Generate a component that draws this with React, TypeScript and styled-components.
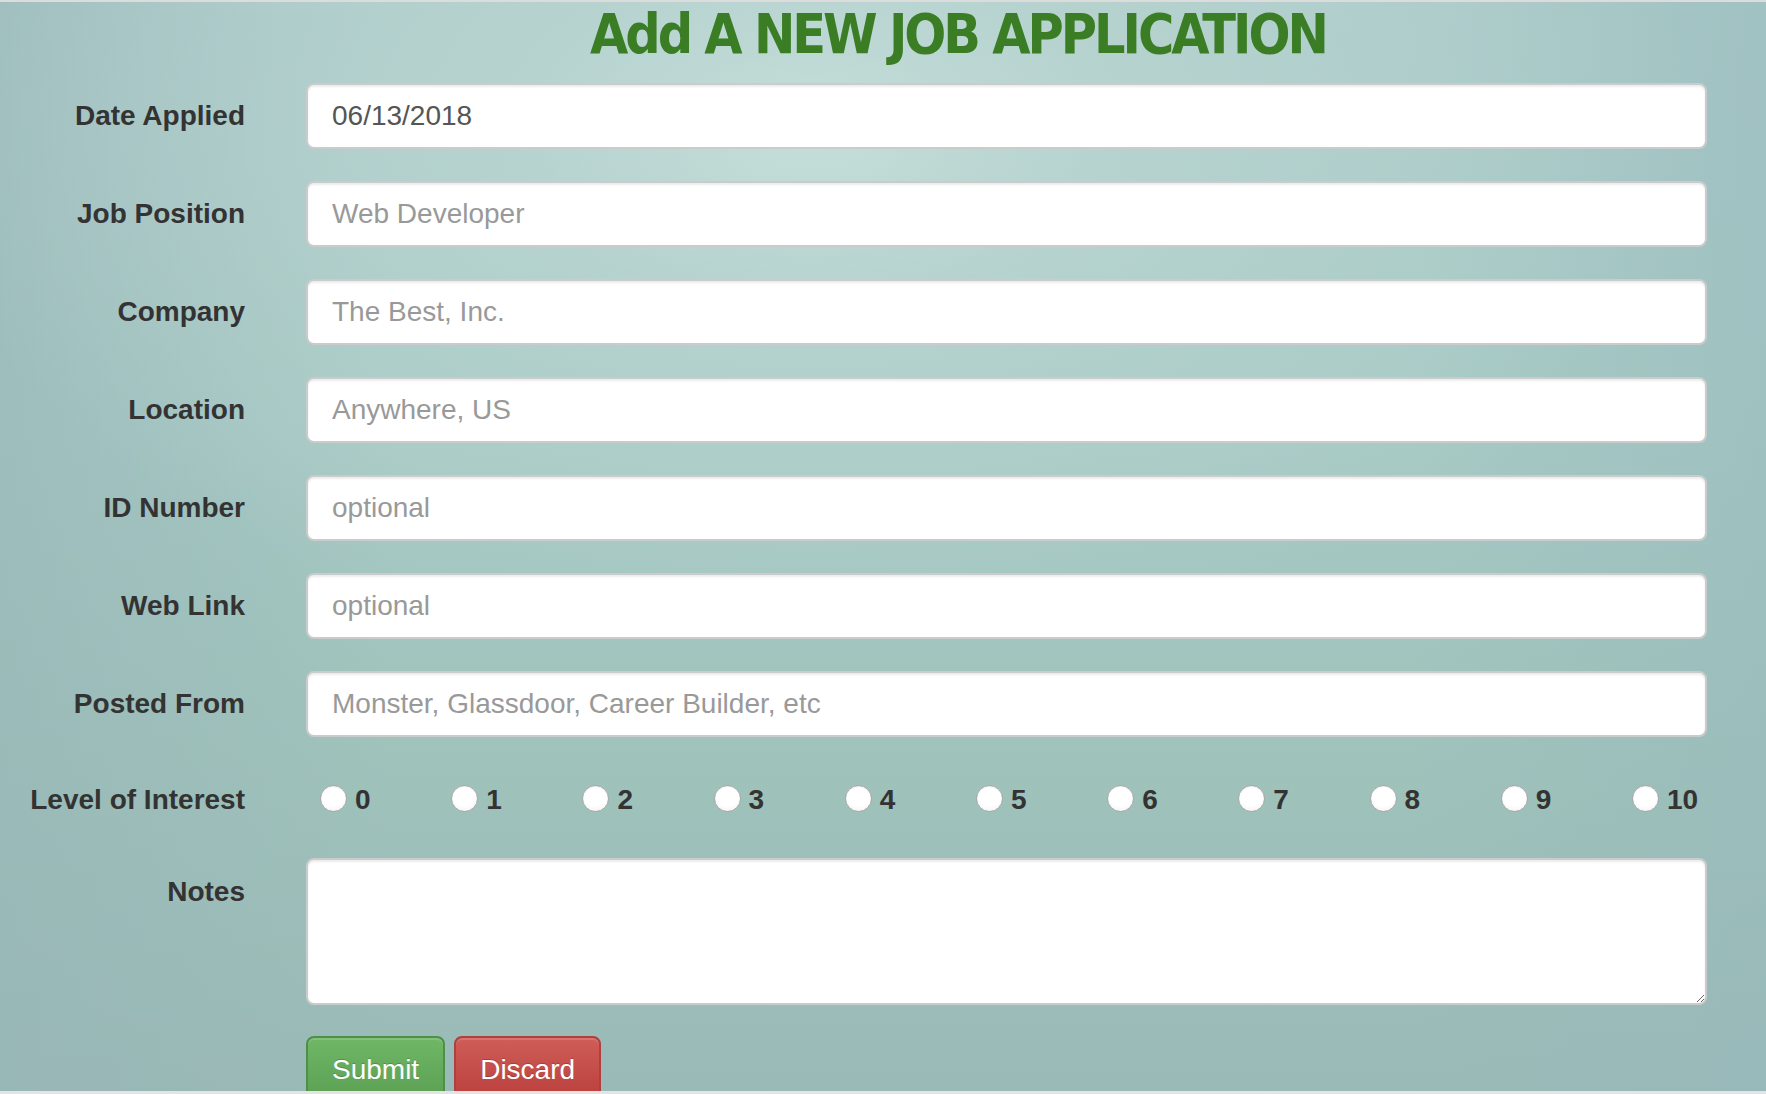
import React from "react";
import styled, { createGlobalStyle } from "styled-components";

const GlobalStyle = createGlobalStyle`
  html, body {
    margin: 0;
    padding: 0;
    width: 1766px;
    height: 1094px;
    overflow: hidden;
  }
  body {
    font-family: "Liberation Sans", Arial, sans-serif;
    color: #333;
  }
  * { box-sizing: border-box; }
`;

const Frame = styled.div`
  display: flex;
  flex-direction: column;
  width: 1766px;
  height: 1094px;
`;

const Strip = styled.div<{ $h: number; $c: string }>`
  flex: 0 0 ${(p) => p.$h}px;
  background: ${(p) => p.$c};
`;

const Page = styled.main`
  flex: 1 1 auto;
  overflow: hidden;
  background:
    radial-gradient(ellipse 900px 520px at 46% 12%, rgba(198, 223, 218, 0.95) 0%, rgba(190, 216, 212, 0.6) 35%, rgba(170, 203, 200, 0) 100%),
    linear-gradient(90deg, rgba(150, 180, 182, 0.55) 0%, rgba(150, 180, 182, 0) 22%, rgba(150, 180, 182, 0) 80%, rgba(150, 184, 188, 0.45) 100%),
    linear-gradient(180deg, #aacac8 0%, #a6c9c4 40%, #9fc2bb 70%, #9abab7 100%);
`;

const Title = styled.h1`
  margin: 0;
  padding-left: 150px;
  text-align: center;
  font-family: "DejaVu Sans", sans-serif;
  font-stretch: condensed;
  font-weight: bold;
  font-size: 55px;
  line-height: 64px;
  color: #3a7d24;
  letter-spacing: -3px;
  white-space: nowrap;
`;

const Form = styled.form`
  display: flex;
  flex-direction: column;
  margin-top: 17px;
  padding-right: 59px;
`;

const Group = styled.div<{ $top?: boolean; $last?: boolean }>`
  display: grid;
  grid-template-columns: 245px 1fr;
  column-gap: 61px;
  align-items: ${(p) => (p.$top ? "start" : "center")};
  margin-bottom: ${(p) => (p.$last ? "0" : "32px")};
`;

const RadioGroup = styled(Group)`
  height: 62px;
  margin-bottom: 27px;
`;

const Label = styled.label<{ $pad?: boolean }>`
  text-align: right;
  font-weight: bold;
  font-size: 28px;
  line-height: 40px;
  color: #333;
  padding-top: ${(p) => (p.$pad ? "14px" : "0")};
`;

const Input = styled.input`
  height: 66px;
  width: 100%;
  padding: 0 24px;
  border: 2px solid #cbcbcb;
  border-radius: 8px;
  background: #fff;
  box-shadow: inset 0 2px 2px rgba(0, 0, 0, 0.075);
  font-family: "Liberation Sans", Arial, sans-serif;
  font-size: 28px;
  color: #555;
  outline: none;
  &::placeholder { color: #999; }
`;

const TextArea = styled.textarea`
  height: 147px;
  width: 100%;
  padding: 12px 24px;
  border: 2px solid #cbcbcb;
  border-radius: 8px;
  background: #fff;
  box-shadow: inset 0 2px 2px rgba(0, 0, 0, 0.075);
  font-family: "Liberation Sans", Arial, sans-serif;
  font-size: 28px;
  color: #555;
  outline: none;
  resize: vertical;
  display: block;
`;

const Radios = styled.div`
  display: grid;
  grid-template-columns: repeat(11, 131.2px);
  padding-left: 14px;
  align-items: center;
`;

const RadioItem = styled.label`
  display: flex;
  align-items: center;
  gap: 8px;
  font-weight: bold;
  font-size: 28px;
  line-height: 40px;
  color: #333;
`;

const Radio = styled.input`
  appearance: none;
  -webkit-appearance: none;
  margin: 0;
  width: 27px;
  height: 27px;
  border-radius: 50%;
  border: 1px solid #a9a9a9;
  background: radial-gradient(circle at 50% 35%, #ffffff 55%, #ededed 100%);
  box-shadow: inset 0 1px 1px rgba(0, 0, 0, 0.08);
  transform: translateY(-2px);
`;

const Buttons = styled.div`
  display: flex;
  gap: 9px;
  margin-top: 31px;
  padding-left: 306px;
`;

const Button = styled.button<{ $variant: "success" | "danger" }>`
  flex: 0 0 auto;
  height: 68px;
  padding: 12px 24px;
  border-radius: 8px;
  font-family: "Liberation Sans", Arial, sans-serif;
  font-size: 28px;
  line-height: 40px;
  color: #fff;
  text-shadow: 0 -1px 0 rgba(0, 0, 0, 0.2);
  border: 2px solid ${(p) => (p.$variant === "success" ? "#4f9048" : "#b0403b")};
  background: ${(p) =>
    p.$variant === "success"
      ? "linear-gradient(180deg, #6fb767 0%, #5a9e52 100%)"
      : "linear-gradient(180deg, #cf5d58 0%, #b93e3a 100%)"};
  box-shadow: inset 0 2px 0 rgba(255, 255, 255, 0.15);
`;

const fields: { label: string; placeholder?: string; value?: string }[] = [
  { label: "Date Applied", value: "06/13/2018" },
  { label: "Job Position", placeholder: "Web Developer" },
  { label: "Company", placeholder: "The Best, Inc." },
  { label: "Location", placeholder: "Anywhere, US" },
  { label: "ID Number", placeholder: "optional" },
  { label: "Web Link", placeholder: "optional" },
  { label: "Posted From", placeholder: "Monster, Glassdoor, Career Builder, etc" },
];

export default function App() {
  return (
    <>
      <GlobalStyle />
      <Frame>
        <Strip $h={2} $c="#dcdcdc" />
        <Page>
          <Title>Add A NEW JOB APPLICATION</Title>
          <Form onSubmit={(e) => e.preventDefault()}>
            {fields.map((f) => (
              <Group key={f.label}>
                <Label>{f.label}</Label>
                <Input
                  type="text"
                  placeholder={f.placeholder}
                  defaultValue={f.value}
                />
              </Group>
            ))}
            <RadioGroup>
              <Label>Level of Interest</Label>
              <Radios>
                {Array.from({ length: 11 }, (_, i) => (
                  <RadioItem key={i}>
                    <Radio type="radio" name="interest" value={i} />
                    {i}
                  </RadioItem>
                ))}
              </Radios>
            </RadioGroup>
            <Group $top $last>
              <Label $pad>Notes</Label>
              <TextArea />
            </Group>
          </Form>
          <Buttons>
            <Button type="button" $variant="success">Submit</Button>
            <Button type="button" $variant="danger">Discard</Button>
          </Buttons>
        </Page>
        <Strip $h={3} $c="#e4e4e4" />
      </Frame>
    </>
  );
}
